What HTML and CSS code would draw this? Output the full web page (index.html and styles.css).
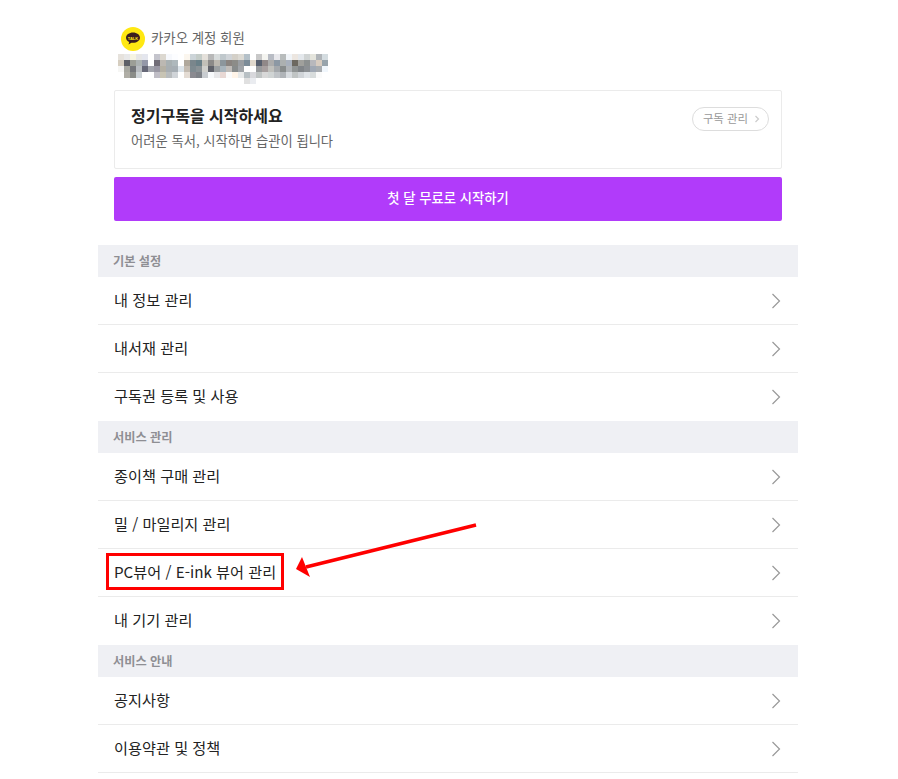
FILE: index.html
```html
<!DOCTYPE html>
<html lang="ko">
<head>
  <meta charset="UTF-8">
  <title>내 계정</title>
  <meta name="viewport" content="width=device-width, initial-scale=1.0">
  <link rel="stylesheet" href="styles.css">
</head>
<body>

<div class="page">

  <div class="profile">
    <div class="account">
      <svg class="talk-icon" width="24" height="24" viewBox="0 0 24 24">
        <circle cx="12" cy="12" r="12" fill="#ffe812"/>
        <path d="M12 5.5c-3.9 0-7 2.3-7 5.2 0 1.9 1.3 3.500 3.200 4.400l-.7 2.500 2.900-1.900c.5.1 1.100.1 1.600.1 3.900 0 7-2.300 7-5.100S15.900 5.500 12 5.500z" fill="#3c1e1e"/>
        <text x="12" y="12.500" class="talk-text">TALK</text>
      </svg>
      <span class="account-name">카카오 계정 회원</span>
    </div>
    <svg class="mosaic" id="mosaic" width="216" height="32" shape-rendering="crispEdges"></svg>
  </div>

  <div class="sub-card">
    <div>
      <div class="sub-title">정기구독을 시작하세요</div>
      <div class="sub-desc">어려운 독서, 시작하면 습관이 됩니다</div>
    </div>
    <a class="sub-manage">구독 관리
      <svg class="sub-chevron" width="6" height="8" viewBox="0 0 6 8"><path d="M1.500 1l3 3-3 3" fill="none" stroke="#ccc" stroke-width="1.200"/></svg>
    </a>
  </div>

  <button class="start-btn">첫 달 무료로 시작하기</button>

  <div class="section-title">기본 설정</div>
  <a class="menu-row">내 정보 관리<svg class="chevron" width="10" height="16" viewBox="0 0 10 16"><path d="M1.500 1l7 7-7 7"/></svg></a>
  <a class="menu-row">내서재 관리<svg class="chevron" width="10" height="16" viewBox="0 0 10 16"><path d="M1.500 1l7 7-7 7"/></svg></a>
  <a class="menu-row no-line">구독권 등록 및 사용<svg class="chevron" width="10" height="16" viewBox="0 0 10 16"><path d="M1.500 1l7 7-7 7"/></svg></a>

  <div class="section-title">서비스 관리</div>
  <a class="menu-row">종이책 구매 관리<svg class="chevron" width="10" height="16" viewBox="0 0 10 16"><path d="M1.500 1l7 7-7 7"/></svg></a>
  <a class="menu-row">밀 / 마일리지 관리<svg class="chevron" width="10" height="16" viewBox="0 0 10 16"><path d="M1.500 1l7 7-7 7"/></svg></a>
  <a class="menu-row">PC뷰어 / E-ink 뷰어 관리<svg class="chevron" width="10" height="16" viewBox="0 0 10 16"><path d="M1.500 1l7 7-7 7"/></svg></a>
  <a class="menu-row no-line">내 기기 관리<svg class="chevron" width="10" height="16" viewBox="0 0 10 16"><path d="M1.500 1l7 7-7 7"/></svg></a>

  <div class="section-title">서비스 안내</div>
  <a class="menu-row">공지사항<svg class="chevron" width="10" height="16" viewBox="0 0 10 16"><path d="M1.500 1l7 7-7 7"/></svg></a>
  <a class="menu-row">이용약관 및 정책<svg class="chevron" width="10" height="16" viewBox="0 0 10 16"><path d="M1.500 1l7 7-7 7"/></svg></a>

  <!-- annotation drawn over the list -->
  <div class="red-box"></div>
  <svg class="red-arrow" width="190" height="60" viewBox="0 0 190 60">
    <path d="M186 3L16 45" stroke="#f00" stroke-width="3.400" fill="none"/>
    <path d="M6 47L12 35 20 55z" fill="#f00"/>
  </svg>
</div>

<script src="mosaic.js"></script>
</body>
</html>
```

FILE: styles.css
```css
* { box-sizing: border-box; }
body { margin: 0; background: #fff; font-family: "Noto Sans CJK KR", "Noto Sans", sans-serif; color: #222; }
a { color: inherit; text-decoration: none; }

.page { position: relative; width: 700px; margin-left: 98px; }

.profile { padding: 27px 16px 0 20px; height: 90px; }
.account { display: flex; align-items: center; gap: 6px; height: 24px; margin-left: 3px; font-size: 13.400px; color: #666; }
.account-name { margin-bottom: 5px; }
.talk-icon { flex: none; }
.talk-text { font-family: "Liberation Sans", sans-serif; font-size: 4px; font-weight: bold; fill: #ffe812; text-anchor: middle; }
.mosaic { display: block; margin-top: 3px; }

.sub-card { display: flex; justify-content: space-between; align-items: flex-start; margin: 0 16px; height: 79px; padding: 14px 12px 0 16px; border: 1px solid #ebebeb; border-radius: 2px; }
.sub-title { font-size: 16px; font-weight: 700; line-height: 20px; color: #222; }
.sub-desc { margin-top: 6px; font-size: 13.300px; line-height: 20px; color: #666; }
.sub-manage { display: flex; align-items: center; gap: 6px; height: 24px; margin-top: 2px; padding: 0 8px 3px 10px; border: 1px solid #ddd; border-radius: 12px; font-size: 11.400px; color: #999; }
.sub-chevron { margin-top: 3px; }

.start-btn { display: block; width: 668px; height: 44px; margin: 8px 16px 24px; padding: 0 0 4px; border: 0; border-radius: 2px; background: #b13bfa; color: #fff; font-family: inherit; font-size: 13.300px; font-weight: 500; }

.section-title { height: 32px; padding-left: 15px; background: #eff0f4; font-size: 12.200px; font-weight: 700; line-height: 32px; color: #8e8e93; }

.menu-row { display: flex; align-items: center; justify-content: space-between; height: 48px; padding: 0 17px 4px 16px; border-bottom: 1px solid #ebebeb; font-size: 15.200px; color: #222; }
.menu-row.no-line { border-bottom: 0; }
.chevron { flex: none; margin-top: 4px; }
.chevron path { fill: none; stroke: #999; stroke-width: 1.200; }

.red-box { position: absolute; left: 8px; top: 553px; width: 178px; height: 37px; border: 3px solid #f00; }
.red-arrow { position: absolute; left: 192px; top: 522px; }
```

FILE: mosaic.js
```js
// blurred account name, one row per 6px
var rows = [
  'e6e2dc e8e8e8 f6f4e2 e6e6e6 e4e6ee fff c4c4cc dcd8d0 f6f8fc fcfdff fff fbf6ee ccd4d8 c4ccc8 e4e0da b8b8b8 d8dcdc c0c8cc d0d4d8 d4d0c8 dcdad4 b4c0c8 fff c8c8c8 f4f4f0 b8bcc4 e8e8ec b8bcbc f0f4f8 ece6e0 e4e8ec d0d4d4 e4e4dc b0b4b8 d4dce0',
  'd6cec0 5e6066 9c9e96 acb2b2 9498a8 fff 726e78 bcb8b2 a8b0b2 aeb8bc fff b0a89c 7a868c 6a8088 c2c0b8 8c8a88 bcb8b0 8c969c 8a8480 8c8c88 9a9ea2 7c8c98 e0d8cc 58606e 908888 acacac 8c98a4 acb0b0 a8b0bc 6c6860 a0a09c 8c9090 b8b8bc d8ccc0 98a4ac',
  'f6f6f4 a8a8a0 74767a b8bcc0 666878 a4a6ae 9a98a4 b4b0a4 a8aeb2 a6aeb4 dce4ea c4bcb2 7e8a90 8a9296 d0d0cc 60626a 9ca0a2 a8b4bc c0bcb8 888c8c a0a4a8 fff fff 989a9c a8a0a0 c0c0bc a4a8ac 888c8c b0b4b8 909494 808488 8c9094 a0a8b4 a8acb0 f0f6fc',
  'fff b0aea6 8a8c88 ccd2d6 fff fff c0bec6 c8c4b4 b8bcbe d0d4d8 fff e4dcd4 8a8a90 7e8288 c8ccd0 f8fafc e8e8ea e8d8d4 fbfbfb fff4e8 e8eaea b8c0c4 d8d8dc c0c4c4 d8d8d8 d0d4d4 c0c4c8 b0b4b8 d8dce0 c0c4c4 d0d4d8 e0e4e8 d8dcdc fafafa fff',
  'fff fff fff fff fff fff fff fff fff fff fff fff fff fff fff fff fff fff fff fff fff e0e0e0 eaecf0'
];

var svg = document.getElementById('mosaic');
rows.forEach(function (row, y) {
  row.split(' ').forEach(function (color, x) {
    var r = document.createElementNS('http://www.w3.org/2000/svg', 'rect');
    r.setAttribute('x', x * 6);
    r.setAttribute('y', y * 6);
    r.setAttribute('width', 6);
    r.setAttribute('height', 6);
    r.setAttribute('fill', '#' + color);
    svg.appendChild(r);
  });
});
```
